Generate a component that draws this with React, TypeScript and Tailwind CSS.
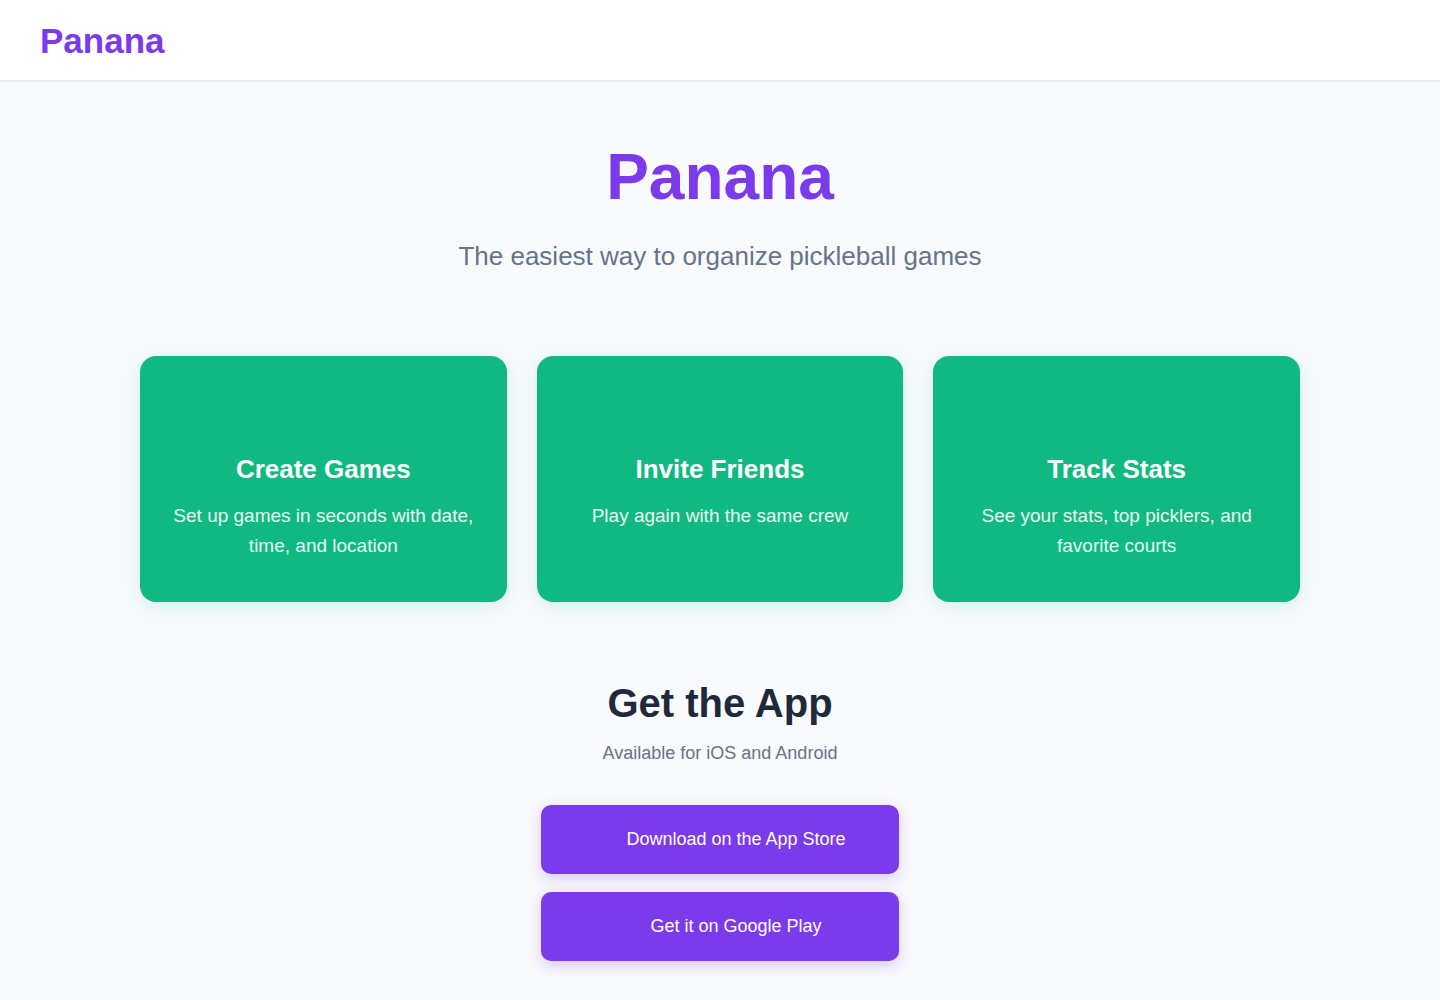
import React from "react";

const features = [
  { title: "Create Games", text: "Set up games in seconds with date, time, and location" },
  { title: "Invite Friends", text: "Play again with the same crew" },
  { title: "Track Stats", text: "See your stats, top picklers, and favorite courts" },
];

export default function App() {
  return (
    <div className="min-h-screen bg-[#f8fafc] font-['Liberation_Sans',Arial,sans-serif]">
      <header className="flex h-[81px] items-center border-b border-[#e5e7eb] bg-white px-10 shadow-[0_1px_3px_rgba(0,0,0,0.06)]">
        <span className="text-[35px] font-bold leading-none text-[#7c3aed]">Panana</span>
      </header>

      <main className="flex flex-col items-center pb-10">
        <h1 className="mt-[58px] text-[64px] font-bold leading-[1.2] text-[#7c3aed]">Panana</h1>
        <p className="mt-[21px] text-[26px] leading-[38px] text-[#64748b]">
          The easiest way to organize pickleball games
        </p>

        <div className="mt-[81px] grid w-[1160px] grid-cols-3 gap-[30px]">
          {features.map((f) => (
            <div
              key={f.title}
              className="flex h-[246px] flex-col items-center rounded-2xl bg-[#10b981] px-8 pt-[98px] text-center text-white shadow-[0_4px_20px_rgba(16,185,129,0.15)]"
            >
              <h3 className="text-[26px] font-bold leading-[30px]">{f.title}</h3>
              <p className="mt-[17px] text-[19px] leading-[30px] text-white/90">{f.text}</p>
            </div>
          ))}
        </div>

        <h2 className="mt-[77px] text-[40px] font-bold leading-[1.2] text-[#1e293b]">Get the App</h2>
        <p className="mt-[13px] text-[18px] leading-[27px] text-[#64748b]">Available for iOS and Android</p>

        <div className="mt-[38px] flex w-[358px] flex-col gap-[18px]">
          {["Download on the App Store", "Get it on Google Play"].map((label) => (
            <button
              key={label}
              className="flex h-[69px] items-center justify-center gap-2 rounded-[10px] bg-[#7c3aed] text-[18px] text-white shadow-[0_4px_14px_rgba(124,58,237,0.25)]"
            >
              <span className="inline-block w-6" />
              <span>{label}</span>
            </button>
          ))}
        </div>
      </main>
    </div>
  );
}
